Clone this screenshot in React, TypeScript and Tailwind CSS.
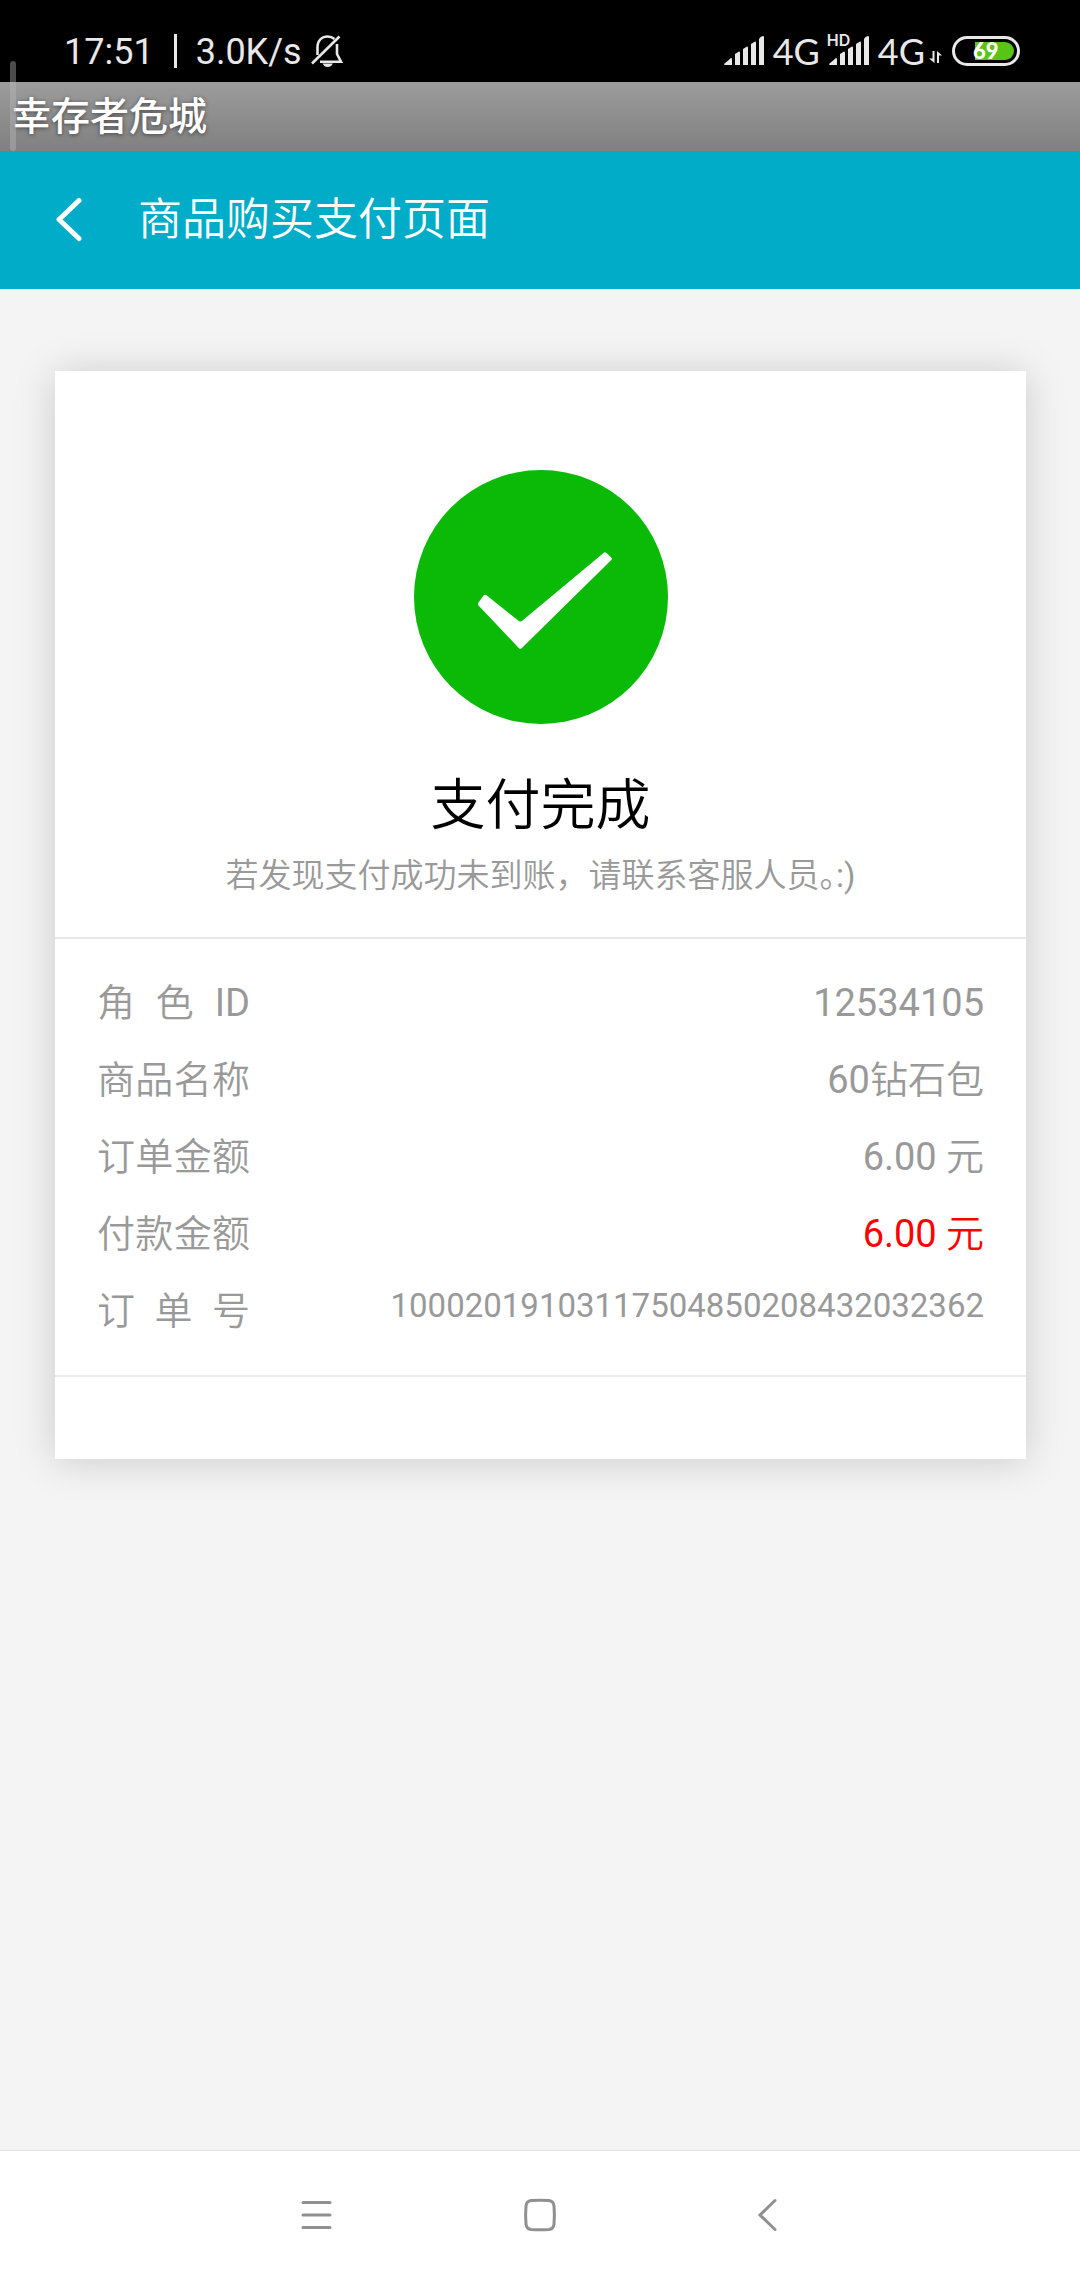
import { ReactNode } from "react";

interface OrderRow {
  label: string;
  value: string;
  highlight?: boolean;
  small?: boolean;
}

const orderRows: OrderRow[] = [
  { label: "角 色 ID", value: "12534105" },
  { label: "商品名称", value: "60钻石包" },
  { label: "订单金额", value: "6.00 元" },
  { label: "付款金额", value: "6.00 元", highlight: true },
  { label: "订 单 号", value: "10002019103117504850208432032362", small: true }
];

// Latin letters and digits stay at regular weight beside the lighter Chinese text
function MixedText({ text }: { text: string }) {
  return (
    <>
      {text.split(/([A-Za-z0-9.]+)/).filter(Boolean).map((part, i) => (
        /^[A-Za-z0-9.]/.test(part) ? <span key={i} className="font-normal">{part}</span> : part
      ))}
    </>
  );
}

function SignalIcon() {
  return (
    <svg width="40" height="30" viewBox="0 0 40 30" fill="#e8e8e8" aria-hidden="true">
      <path d="M0 28 L7 22 Q8 22 8 23 V29 H1 Q0 29 0 28Z" />
      <path d="M11 18 L15 15.500 Q16 15.500 16 16.500 V29 H11Z" />
      <path d="M19 13 L23 10.500 Q24 10.500 24 11.500 V29 H19Z" />
      <path d="M27 8 L31 5.500 Q32 5.500 32 6.500 V29 H27Z" />
      <path d="M35 3 Q36 0.500 39 0 Q40 0 40 1 V29 H35Z" />
    </svg>
  );
}

function BellOffIcon() {
  return (
    <svg width="32" height="32" viewBox="0 0 32 32" fill="none" stroke="#e8e8e8" strokeWidth="2.600" aria-hidden="true">
      <path d="M1 28.500 L28.500 1.500" />
      <path d="M6.500 20 V11.500 C7 5 11 1.500 16.500 1.500 C19.500 1.500 21.500 2.300 23.500 4" />
      <path d="M26 9 V19 L30 26.700 H9" />
      <path d="M11.500 28.500 H22 Q20 32 16.500 32 Q13.500 32 11.500 28.500Z" fill="#e8e8e8" stroke="none" />
    </svg>
  );
}

function StatusBar() {
  return (
    <div className="flex h-[82px] items-center justify-between bg-black pt-5 pr-[60px] pl-16 text-[36px] leading-9 text-[#e8e8e8]">
      <div className="flex items-center">
        <span className="pt-[2px]">17:51</span>
        <span className="mr-[19px] ml-5 h-[34px] w-[3px] bg-[#e8e8e8]" />
        <span className="pt-[2px]">3.0K/s</span>
        <span className="ml-[9px]">
          <BellOffIcon />
        </span>
      </div>
      <div className="flex items-center">
        <SignalIcon />
        <span className="ml-[9px] font-['Lato',sans-serif]">4G</span>
        <span className="relative ml-[9px]">
          <SignalIcon />
          <span className="absolute -top-1 -left-[2px] font-['Inter',sans-serif] text-base leading-4 font-semibold">HD</span>
        </span>
        <span className="ml-[9px] font-['Lato',sans-serif]">4G</span>
        <svg className="mt-3 ml-1" width="14" height="14" viewBox="0 0 14 14" fill="#e8e8e8" aria-hidden="true">
          <path d="M3.500 1 H5.500 V13 L0 8.500 H3.500Z" />
          <path d="M8 1 L13 5.500 H10 V13 H8Z" />
        </svg>
        <div className="relative ml-[9px] flex h-[30px] w-[68px] items-center justify-end rounded-full border-[3px] border-[#e8e8e8] pr-[3px]">
          <span className="h-[18px] w-[39px] rounded-r-full bg-[#58c416]" />
          <span className="absolute top-0 left-[18px] font-['Lato',sans-serif] text-[22px] leading-6 font-black text-white">69</span>
        </div>
      </div>
    </div>
  );
}

function NavButton({ label, children }: { label: string; children: ReactNode }) {
  return (
    <button type="button" aria-label={label} className="flex h-16 w-16 items-center justify-center">
      <svg width="34" height="34" viewBox="0 0 34 34" fill="none" stroke="#909090" strokeWidth="3" strokeLinecap="round" aria-hidden="true">
        {children}
      </svg>
    </button>
  );
}

export default function App() {
  return (
    <div lang="zh-CN" className="relative flex min-h-screen flex-col bg-[#f4f4f4] font-['Roboto','Noto_Sans_CJK_SC',sans-serif]">
      <StatusBar />

      <div className="flex h-[69px] items-center bg-linear-to-b from-[#9c9c9c] to-[#808080] pl-3">
        <span className="text-[39px] leading-[66px] font-medium text-white [text-shadow:0_1px_4px_#444444]">幸存者危城</span>
      </div>

      {/* Scroll indicator, drawn over both bars */}
      <span className="absolute top-[61px] left-[10px] h-[90px] w-[6px] rounded-full bg-[#bbbbbb]/40" />

      <header className="flex h-[138px] items-center gap-14 bg-[#00acc7] pl-[54px] text-white">
        <button type="button" aria-label="返回">
          <svg width="28" height="46" viewBox="0 0 28 46" fill="none" stroke="currentColor" strokeWidth="5" strokeLinecap="round" strokeLinejoin="round" aria-hidden="true">
            <path d="M25 3.500 L5 22.500 L25 41.500" />
          </svg>
        </button>
        <h1 className="text-[44px] leading-[66px] font-[350]">商品购买支付页面</h1>
      </header>

      <main className="flex-1 pt-[82px] pr-[54px] pb-20 pl-[55px]">
        <section className="bg-white pb-[82px] shadow-[0_2px_38px_rgba(0,0,0,0.17)]">
          <div className="flex flex-col items-center border-b-2 border-[#e8e8e8] pt-[99px] pb-9">
            <svg width="254" height="254" viewBox="0 0 254 254" aria-hidden="true">
              <circle cx="127" cy="127" r="127" fill="#0aba07" />
              <path
                d="M64.500 132.500 L69.500 125.500 Q71 124 72.500 125.300 L104.500 150.800 Q106.300 152.300 108.200 150.800 L189.500 83 Q191 81.500 192.500 83 L197.300 87.500 Q198.500 88.700 197.300 90 L107.600 178.200 Q106.300 179.500 105 178.200 L64.500 135.500 Q63.300 134 64.500 132.500Z"
                fill="#ffffff"
              />
            </svg>
            <h2 className="mt-[41px] text-[55px] leading-[80px] font-[350] text-black">支付完成</h2>
            <p className="mt-[6px] text-[33px] leading-[50px] font-[350] text-[#999999]">
              若发现支付成功未到账，请联系客服人员<span className="[font-feature-settings:'halt']">。</span>
              <span className="font-normal">:)</span>
            </p>
          </div>

          <dl className="border-b-2 border-[#ebebeb] px-[42px] pt-[26px] pb-[25px] text-[38px] leading-[77px] font-[350] text-[#999999]">
            {orderRows.map(row => (
              <div key={row.label} className="flex h-[77px] items-start justify-between">
                <dt className="w-[153px] [text-align-last:justify]">
                  <MixedText text={row.label} />
                </dt>
                <dd className={`${row.small ? "text-[33px] leading-[66px]" : ""} ${row.highlight ? "text-[#ff0000]" : ""}`}>
                  <MixedText text={row.value} />
                </dd>
              </div>
            ))}
          </dl>
        </section>
      </main>

      <nav className="flex h-[130px] items-center justify-center gap-40 border-t border-[#e2e2e2] bg-white pb-[2px]">
        <NavButton label="菜单">
          <path d="M4 4.500 H31 M4 17 H31 M4 29.500 H31" />
        </NavButton>
        <NavButton label="主页">
          <path d="M8 2.500 Q17 1.800 26 2.500 Q30.500 3 31 8 Q31.800 17 31 26 Q30.500 31 26 31.500 Q17 32.200 8 31.500 Q3.500 31 3 26 Q2.200 17 3 8 Q3.500 3 8 2.500Z" />
        </NavButton>
        <NavButton label="后退">
          <path d="M28 2.500 L13 17 L28 31.500" />
        </NavButton>
      </nav>
    </div>
  );
}
